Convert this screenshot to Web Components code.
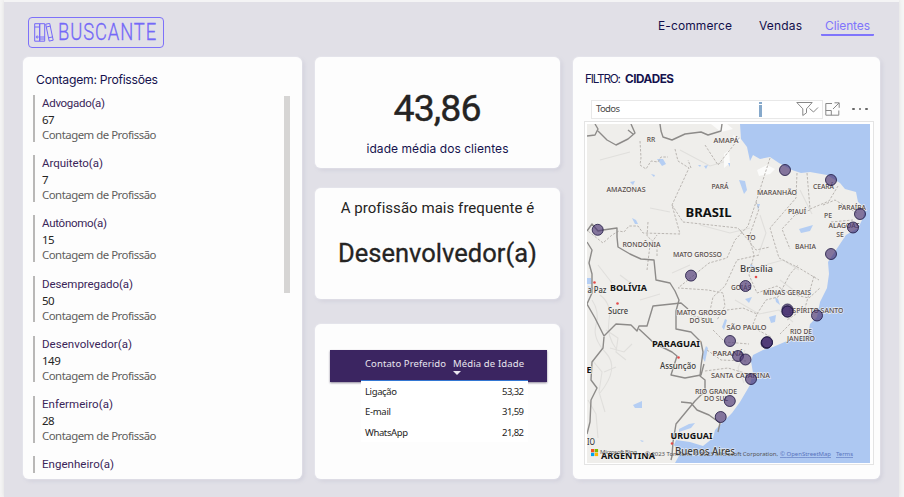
<!DOCTYPE html>
<html lang="pt-BR">
<head>
<meta charset="utf-8">
<title>Buscante</title>
<style>
html,body{margin:0;height:100%;overflow:hidden;background:#f5f5f5;font-family:Roboto,"Liberation Sans",sans-serif}
</style>
</head>
<body>
<buscante-dashboard></buscante-dashboard>
<script>
const define = (name, html, setup) => {
  const t = document.createElement('template');
  t.innerHTML = html;
  customElements.define(name, class extends HTMLElement {
    constructor() { super(); this.attachShadow({mode: 'open'}).append(t.content.cloneNode(true)); }
    connectedCallback() { if (setup) setup.call(this, this.shadowRoot); }
  });
};

/* One line of text tracked to fill a given width. */
define('fit-text', `<style>
:host{display:block;white-space:nowrap;line-height:1}
span{display:inline-block;transform-origin:0 50%}
</style><span><slot></slot></span>`, function (r) {
  const s = r.querySelector('span'), w = +this.getAttribute('w'), n = this.textContent.length;
  const natural = s.getBoundingClientRect().width;
  if (w && natural) {
    s.style.letterSpacing = (w - natural) / (n - 1) + 'px';
    s.style.marginRight = -(w - natural) / (n - 1) + 'px';
  }
});

define('brand-logo', `<style>
:host{display:flex;align-items:center;gap:4px;box-sizing:border-box;width:136px;height:31px;padding-left:5px;border:1.5px solid #7d71fa;border-radius:4px;color:#7468f8;font:300 23px Roboto,sans-serif}
svg{flex:none}
.n{display:block;width:97px;height:23px;line-height:23px;white-space:nowrap;overflow:visible}
.n span{display:inline-block;transform-origin:0 50%;transform:scaleX(.8);letter-spacing:1.1px;-webkit-text-stroke:.3px #7468f8}
</style>
<svg width="20" height="19" viewBox="0 0 20 19" fill="none" stroke="#7468f8"><path d="M.7.7h5v17.5h-5zM5.7.7h5v17.500h-5zM.7 4h5M5.7 14h5M5.7 16h5M11.700 1.200l4-.8 3.500 16.800-4 .9zM12.300 4l4-.9M14.600 14.800l4-.9"/><circle cx="3.2" cy="14" r="1"/></svg>
<div class="n"><span>BUSCANTE</span></div>`);

define('nav-link', `<style>
:host{display:block;box-sizing:border-box;height:19px;color:#120f4b;font:400 12px Inter,sans-serif;padding:3px 4px 0;border-bottom:2px solid transparent;border-radius:1px;margin-top:-.5px}
:host([active]){color:#7f75fc;border-color:#7f75fc;margin-left:-4px}
</style><slot></slot>`);

define('ui-card', `<style>
:host{display:block;box-sizing:border-box;background:#fdfdfd;border-radius:6px;box-shadow:0 0 2px #f7f7fb,2px 2px 4px #cfceda;min-width:0}
</style><slot></slot>`);

define('count-item', `<style>
:host{display:block;box-sizing:border-box;flex:none;height:46.6px;padding:3px 0 0 7px;border-left:2px solid #b9b8b7;color:#252423}
.n{color:#3a2559;font-size:11.5px;height:16px;line-height:12px}
.v{font:11.5px "Noto Sans",sans-serif;line-height:12px;height:15px;letter-spacing:-.5px}
.c{font:11.4px "Noto Sans",sans-serif;line-height:12px;color:#605e5c}
:host(:not([value])){height:17px}
</style>
<div class="n"><slot></slot></div><div class="v"></div><div class="c"><fit-text w="114.5">Contagem de Profissão</fit-text></div>`,
function (r) {
  if (this.hasAttribute('value')) r.querySelector('.v').textContent = this.getAttribute('value');
  else { r.querySelector('.v').remove(); r.querySelector('.c').remove(); }
});

define('count-list', `<style>
:host{display:flex;justify-content:space-between;height:378px;overflow:hidden}
.l{display:flex;flex-direction:column;gap:13.6px}
.s{width:6px;height:197px;background:#d6d5d4;margin-top:1px}
</style><div class="l"><slot></slot></div><div class="s"></div>`);

define('age-table', `<style>
:host{display:block;position:relative;font:9.5px "Noto Sans",sans-serif;color:#252423}
.h{display:grid;grid-template-columns:88px 1fr;height:32px;box-sizing:border-box;padding:9px 0 0 35px;background:#3b2561;color:#e9e6ef;box-shadow:0 1px 2px #8c8599}
.a{width:0;height:0;border:4px solid transparent;border-top-color:#e9e6ef;border-bottom:0;margin-top:2px}
.b{margin:-2px 19px 0 31px;border-top:1.5px solid #3377d3;background:#fff;position:relative;height:62px;box-sizing:border-box;padding-top:.5px}
.r{display:flex;justify-content:space-between;height:20.6px;align-items:center;padding:0 4px}
.r *{line-height:10px}
</style>
<div class="h"><fit-text w="81">Contato Preferido</fit-text><div><fit-text w="71">Média de Idade</fit-text><div class="a"></div></div></div>
<div class="b">
<div class="r"><fit-text w="32">Ligação</fit-text><fit-text w="22">53,32</fit-text></div>
<div class="r"><fit-text w="26">E-mail</fit-text><fit-text w="22">31,59</fit-text></div>
<div class="r"><fit-text w="43">WhatsApp</fit-text><fit-text w="22">21,82</fit-text></div>
</div>`);

define('filter-bar', `<style>
:host{display:flex;height:20px;align-items:center}
.f{box-sizing:border-box;width:232px;height:19px;border:1px solid #e8e8e8;display:flex;align-items:center;padding-left:4px;font:9.5px "Noto Sans",sans-serif;color:#4b4a49;background:#fff}
.i{width:3px;margin-left:139px}
.i:before,.i:after{content:"";display:block;background:#86a9cb}
.i:before{height:2px;margin-bottom:1px}.i:after{height:12px}
.f svg{margin-left:34px}
svg{fill:none;stroke:#888}
.d{display:flex;gap:4px;margin-left:11px}
.d b{width:2.500px;height:2.500px;border-radius:1px;background:#666}
</style>
<div class="f"><fit-text w="24">Todos</fit-text><div class="i"></div><svg width="24" height="16" viewBox="0 0 24 16"><path d="M.8 1.500h15.400l-5.700 6.300v4L6.800 14.500V7.800zM13.500 7.500l4 3.500 4.500-4.500"/></svg></div>
<svg width="16" height="15" viewBox="0 0 16 15" style="margin-left:2px"><path d="M7 1.500H.8v11.700H13.800V8.500M.8 8.500h5.500v4.700M8 7l6-6M9.500.8h4.700v5"/></svg>
<div class="d"><b></b><b></b><b></b></div>`);

define('city-map', `<style>
:host{display:block;box-sizing:border-box;width:290px;height:344px;border:1px solid #e4e4e4;padding:2px;background:#fff}
svg{display:block;font-family:"Noto Sans",sans-serif}
.st{fill:none;stroke:#b4b0ac;stroke-width:.9;stroke-dasharray:2.500 1.500}
.co{fill:none;stroke:#8d8b89;stroke-width:1.400;stroke-linejoin:round}
.re{fill:none;stroke:#e0dfdc;stroke-width:1.100}
.lk{fill:#b5cef3}
text{text-anchor:middle;fill:#574c4a;font-weight:500;paint-order:stroke;stroke:#f4f3f0;stroke-opacity:.8;stroke-width:1.300px}
.k{fill:#111;font-weight:700}
.t{fill:#3c3c3c;font-weight:500}
.d{fill:#e34b4b}
.p{fill:#4a3574;fill-opacity:.66;stroke:#1d1640;stroke-opacity:.8;stroke-width:1}
.a{text-anchor:start;stroke:none;fill:#555;font-weight:400}
</style>
<svg width="283" height="339" viewBox="587 124 283 339">
<rect x="587" y="124" width="283" height="339" fill="#efeeeb"/>
<g class="re">
<path d="M592 300q8 12 4 25t10 28-6 40M600 295q12 9 9 25t8 30M606 330l12 8-2 14 10 8M592 360l10 12-3 20 6 20M588 400l8 14 2 24M610 348l14 4 8-8M604 372l12-5M640 300l20-6M620 275l16 12M598 265l14 18"/>
<path d="M700 225l30 8 20-5M735 300l24 14 20-4 14 12M765 265l18-5 16 10M780 280l20 15M760 215l6 18-7 20M800 190l12 24M745 350l-7 18 6 15M600 160l30-8M680 150l30 16 20-6M690 265l-18 8M650 208l20 4"/>
</g>
<path fill="#fbfbfa" d="M757 170l10-5 8 4-5 5-11 2zM729 150l-5 4v14l6-5zM733 135l8 5-6 3zM711 124l16 0 6 5-12 3z"/>
<path fill="#adc8f2" d="M740 124L741 139 747 147 750 161 753 155 760 159 770 157 779 163 792 170 801 173 810 172 827 175 840 183 845 189 856 192 858 202 865 208 863 218 858 228 846 235 838 247 828 262 829 274 827 288 820 302 817 317 810 324 808 335 797 338 787 341 773 347 763 350 753 355 751 361 753 373 750 385 740 402 732 413 723 422 715 430 713 438 703 446 690 442 676 440 674 445 680 454 675 463H870V124Z"/>
<g class="lk">
<path d="M657 159l6 0 3 5-4 2zM651 174l4 1-1 2zM630 182l5-1-2 4zM698 165l3 0-1 2zM704 166l4-1-2 4zM728 163l2 0 0 4zM739 180l6 1 2 9-3 4zM757 204l3 0-2 6zM799 229l14-4-3 6-9 2zM750 264l7 4-6 2zM745 299l7-2-3 6zM775 297l3 2 2 6-4-3zM769 317l7-2-1 7-4 1zM632 218l4 2 2 4-3 0zM587 278l4 0 1 6-5 0zM588 286l6 2-4 5zM633 405l9-4 0 7-7 0zM679 429l10-5 6-1-4 5-12 4zM640 440l4 1-2 1zM702 357l4-11 2 2-3 14zM722 327l3-8 2 1-3 10z"/>
</g>
<g class="st">
<path d="M640 141l1 17-1 7 6 4 5-8 7 1 3-5h7M675 149l3 12 11 7-17 37 8 29-37-1-5-7-9 0-5 6-5-1-7 4-9 8-15-12"/>
<path d="M672 205l11 17 55 6 6 7M648 222l-1 14 10 9v12M705 145l13 20 22-28M691 168l-3-8M647 270l3-25 7-10"/>
<path d="M770 158l-7 22-7 22-8 24-13 14-8 18-18 5-31 25 30 2 15 3 2 13-8 14M756 202l3 7-10 28 5 18-5 20 8 18 20-7 13 8 19 4 11-10M740 230l16 20 14-3M797 173l-1 25-26 30 9 30 20 10 20 12M807 173l3 36 19-8 9-15M810 210l-15 5-13 14 8 20M823 205l12-5 22 13M831 222l22-2M759 255l-22 5-12 26-12 11-5 23-17-5"/>
<path d="M727 310l16-2 14 6-5 13 19 10-10 10M757 314l9-14 12-3 12-23 8-9M790 324l-10 10M814 276l-9 32-18 12M713 330l12 12 24 2M707 350l14 10 25 1M705 371l23-3 20 6"/>
</g>
<g class="co">
<path d="M587 136l8-1 3-6-3-5M598 131l9 9 9 5 12-6 7-6-4-9M628 130l5 4M660 124l1 7 2 6 9 3 13-6 16-2 7 3 13-4 1-7"/>
<path d="M587 231l5-7 6 7 5-1 14-2v9l1 10 12 7 11 5 13 1 2 20 14 3 5 8 4 9-3 11 0 18 15 3 10 10 2 10-2 14-1 10 5 4 0 11-10 10-19 23-3 18-1 14-1 4"/>
<path d="M587 242l5 8-3 13 3 11 0 19-5 11 8 14 9 18 12-12 15 1 6 6 2-5h8l6-20 28-3 7 6M639 329l15 14 18 9 5 4-6 19 14 3 16-3 3-11M604 337l-1 11-11 14-1 18 6 8-6 12-1 22-3 12M681 402l10 1 6 7 12 5 11 8-2 9"/>
</g>
<g class="d"><circle cx="594.500" cy="282.500" r="1.300"/><circle cx="617.500" cy="303.500" r="1.300"/><circle cx="678.500" cy="357.500" r="1.300"/><circle cx="756" cy="277" r="1.300"/><circle cx="672" cy="443.500" r="1.300"/></g>
<g id="labels"></g>
<g id="pins"></g>
<path fill="#f25022" d="M591 449h3.300v3.300h-3.300z"/><path fill="#7fba00" d="M594.800 449h3.300v3.300h-3.300z"/><path fill="#00a4ef" d="M591 452.800h3.300v3.300h-3.300z"/><path fill="#ffb900" d="M594.800 452.800h3.300v3.300h-3.300z"/>
<g font-size="6">
<text class="a" x="600" y="454" textLength="37">Microsoft Bing</text>
<text class="a" x="645" y="456" textLength="133">© 2023 TomTom, © 2023 Microsoft Corporation,</text>
<text class="a" x="780" y="456" textLength="51" text-decoration="underline" style="fill:#5973bd">© OpenStreetMap</text>
<text class="a" x="836" y="456" textLength="17" text-decoration="underline" style="fill:#5973bd">Terms</text>
</g>
</svg>`, function (r) {
  const NS = 'http://www.w3.org/2000/svg';
  const add = (id, tag, attrs, text) => {
    const e = document.createElementNS(NS, tag);
    for (const k in attrs) e.setAttribute(k, attrs[k]);
    if (text) e.textContent = text;
    r.getElementById(id).append(e);
  };
  /* name, centre x, centre y, width, size, class */
  [['RR',651,139,8.5],['AMAPÁ',726,140,25],['AMAZONAS',626,189,39],['PARÁ',720,186,17],['MARANHÃO',777,192,40],
   ['CEARÁ',823.5,186,21],['PARAÍBA',852,207,28],['PIAUÍ',797,211,18],['PE',828,215,8],['ALAGOAS',844,225,31],['SE',840,234,7.5],
   ['RONDÔNIA',641.5,244.500,38],['MATO GROSSO',697.5,254.500,49],['TO',751,237,9],['BAHIA',805.5,246,21],['GOIÁS',741,287,20],
   ['MINAS GERAIS',787,292.500,48],['MATO GROSSO',701.5,312.500,50],['DO SUL',701.500,320,24],['ESPÍRITO SANTO',816,310.500,55],
   ['SÃO PAULO',746.5,327.500,40],['RIO DE',801,331,22],['JANEIRO',801,338.500,28],['PARANÁ',728,353.500,31],
   ['SANTA CATARINA',740.5,375,59],['RIO GRANDE',716,391,42],['DO SUL',716,398,24],
   ['BRASIL',708.5,213,46,12,'k'],['BOLÍVIA',628.5,287.500,37,9,'k'],['PARAGUAI',676,343.500,48,9,'k'],
   ['URUGUAI',691.500,436,42,9,'k'],['ARGENTINA',628,455.500,54,9,'k'],['E',589,370,5,8,'k'],
   ['Brasília',756.500,269,33,9.500,'t'],['Buenos Aires',705,451.500,60,9.800,'t'],['a Paz',597,290.500,19,8,'t'],
   ['Sucre',618,311.500,20,8,'t'],['Assunção',678,366.500,36,8,'t'],['IO',591,442,8,8,'t']
  ].forEach(([s, x, y, w, z = 7.200, c = '']) =>
    add('labels', 'text', {x, y: y + z * .36, 'font-size': z, textLength: w, lengthAdjust: 'spacingAndGlyphs', class: c}, s));
  [[785,170],[831,180],[860,214],[853,227.500],[597.700,229.800],[831,254],[691,275.600],[745.500,286],[787.500,309.500],[787.500,311.500],
   [787.500,311.500],[817,315.500],[730,341],[766.500,343],[767,342.300],[767,342.300],[738,356],[745.500,359.500],[751,379],[729.800,401],[720.700,417]
  ].forEach(([cx, cy]) => add('pins', 'circle', {cx, cy, r: 5.500, class: 'p'}));
});

define('buscante-dashboard', `<style>
:host{display:block;box-sizing:border-box;height:497px;width:895px;margin-left:4px;padding:0 20px 0 19px;background:#e1e0e7;box-shadow:0 0 4px #ddd;border-top:2px solid #f4f4f5}
header{display:flex;justify-content:space-between;align-items:flex-start;height:55px;padding:15px 5px 0 5px;box-sizing:border-box}
nav{display:flex;gap:19px}
main{display:grid;grid-template-columns:279px 245px 307px;gap:13px;height:422px}
.m{display:grid;grid-template-rows:111px 111px 155px;row-gap:20px}
.m ui-card:nth-child(3){margin-top:5px;height:155px}
h2{margin:0;color:#15124d;font:400 12.200px Inter,sans-serif}
.left{padding:17px 12px 0 10px}
.left h2{margin:0 0 9px 3px;height:12px}
.c{display:flex;flex-direction:column;align-items:center;color:#252423}
.right{padding:17px 0 0 11px}
.right h2{display:flex;gap:4px;height:12px;margin:0 0 13px 1px;font-size:11.700px}
.right filter-bar{margin:0 0 2px 7px}
</style>
<header><brand-logo></brand-logo>
<nav><nav-link><fit-text w="74">E-commerce</fit-text></nav-link><nav-link><fit-text w="43">Vendas</fit-text></nav-link><nav-link active><fit-text w="45">Clientes</fit-text></nav-link></nav></header>
<main>
<ui-card class="left"><h2><fit-text w="122">Contagem: Profissões</fit-text></h2>
<count-list>
<count-item value="67"><fit-text w="63">Advogado(a)</fit-text></count-item>
<count-item value="7"><fit-text w="61">Arquiteto(a)</fit-text></count-item>
<count-item value="15"><fit-text w="65">Autônomo(a)</fit-text></count-item>
<count-item value="50"><fit-text w="91">Desempregado(a)</fit-text></count-item>
<count-item value="149"><fit-text w="90">Desenvolvedor(a)</fit-text></count-item>
<count-item value="28"><fit-text w="71">Enfermeiro(a)</fit-text></count-item>
<count-item><fit-text w="72">Engenheiro(a)</fit-text></count-item>
</count-list></ui-card>
<div class="m">
<ui-card><div class="c" style="padding-top:33px"><fit-text w="88" style="font-size:37.500px;-webkit-text-stroke:.4px #252423">43,86</fit-text><fit-text w="142" style="font:12px/1 Inter,sans-serif;color:#15124d;margin-top:15px">idade média dos clientes</fit-text></div></ui-card>
<ui-card><div class="c" style="padding-top:13px"><fit-text w="193" style="font-size:15px">A profissão mais frequente é</fit-text><fit-text w="199" style="font-size:25.500px;margin-top:25px;-webkit-text-stroke:.3px #252423">Desenvolvedor(a)</fit-text></div></ui-card>
<ui-card><age-table style="margin:26px 13px 0 15px"></age-table></ui-card>
</div>
<ui-card class="right"><h2><fit-text w="36">FILTRO:</fit-text><fit-text w="49" style="font-weight:700">CIDADES</fit-text></h2>
<filter-bar></filter-bar><city-map></city-map></ui-card>
</main>`);
</script>
</body>
</html>
